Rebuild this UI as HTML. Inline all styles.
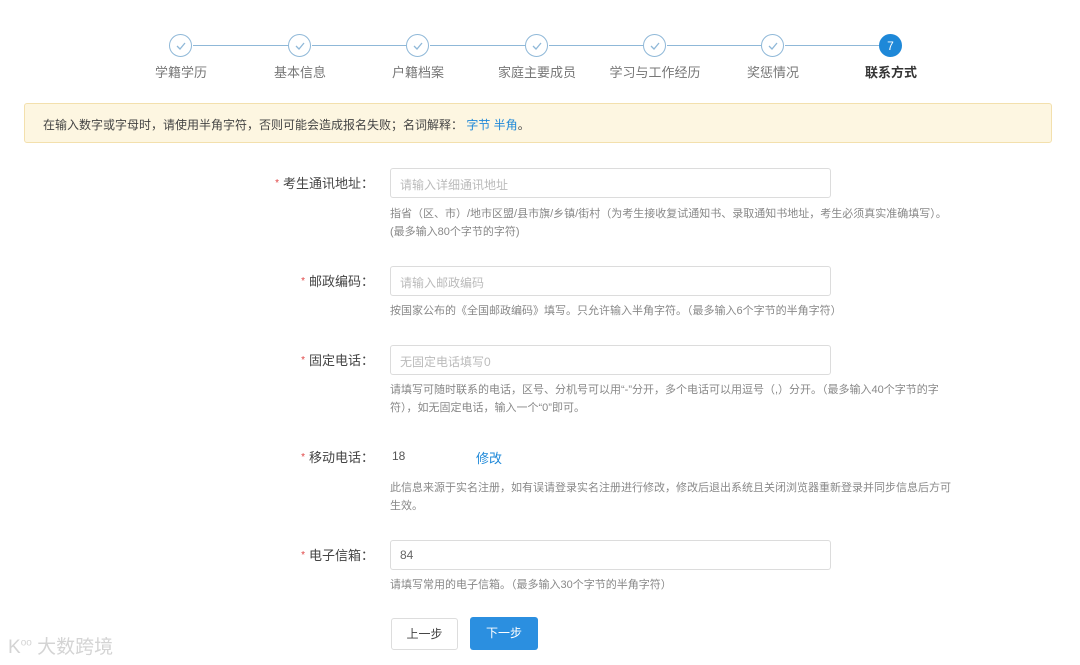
<!DOCTYPE html>
<html><head><meta charset="utf-8"><style>
*{margin:0;padding:0;box-sizing:border-box}
body{width:1080px;height:665px;background:#fff;font-family:"Liberation Sans","Noto Sans CJK SC",sans-serif;position:relative;overflow:hidden;color:#333}
.a{position:absolute}
.c{width:23px;height:23px;border:1.5px solid #8fb8d8;border-radius:50%;display:flex;align-items:center;justify-content:center;background:#fff}
.c.on{background:#1e88d8;border-color:#1e88d8;color:#fff;font-size:12px}
.ln{height:1px;background:#8fb8d8;top:45px}
.sl{top:62px;font-size:13px;color:#777;width:110px;text-align:center}
.lab{font-size:13px;color:#444;text-align:right;width:160px;left:214px}
.lab b{color:#e04444;font-weight:normal;font-size:10px;margin-right:4px;vertical-align:2px}
.in{left:390px;width:441px;height:30px;border:1px solid #dcdcdc;border-radius:3px;font-size:12px;color:#bbb;padding:7px 9px}
.h{left:390px;width:570px;font-size:11px;color:#888;line-height:18px}
</style></head><body>
<div class="a ln" style="left:193px;width:96px"></div>
<div class="a ln" style="left:312px;width:94px"></div>
<div class="a ln" style="left:430px;width:95px"></div>
<div class="a ln" style="left:549px;width:94px"></div>
<div class="a ln" style="left:667px;width:94px"></div>
<div class="a ln" style="left:785px;width:94px"></div>
<div class="a c" style="left:169px;top:34px"><svg width="10" height="8"><path d="M1 4l3 3 5-6" fill="none" stroke="#8fb8d8" stroke-width="1.3"/></svg></div>
<div class="a c" style="left:288px;top:34px"><svg width="10" height="8"><path d="M1 4l3 3 5-6" fill="none" stroke="#8fb8d8" stroke-width="1.3"/></svg></div>
<div class="a c" style="left:406px;top:34px"><svg width="10" height="8"><path d="M1 4l3 3 5-6" fill="none" stroke="#8fb8d8" stroke-width="1.3"/></svg></div>
<div class="a c" style="left:525px;top:34px"><svg width="10" height="8"><path d="M1 4l3 3 5-6" fill="none" stroke="#8fb8d8" stroke-width="1.3"/></svg></div>
<div class="a c" style="left:643px;top:34px"><svg width="10" height="8"><path d="M1 4l3 3 5-6" fill="none" stroke="#8fb8d8" stroke-width="1.3"/></svg></div>
<div class="a c" style="left:761px;top:34px"><svg width="10" height="8"><path d="M1 4l3 3 5-6" fill="none" stroke="#8fb8d8" stroke-width="1.3"/></svg></div>
<div class="a c on" style="left:879px;top:34px">7</div>
<div class="a sl" style="left:126px">学籍学历</div>
<div class="a sl" style="left:245px">基本信息</div>
<div class="a sl" style="left:363px">户籍档案</div>
<div class="a sl" style="left:482px">家庭主要成员</div>
<div class="a sl" style="left:600px">学习与工作经历</div>
<div class="a sl" style="left:718px">奖惩情况</div>
<div class="a sl" style="left:836px;color:#333;font-weight:bold">联系方式</div>
<div class="a" style="left:24px;top:103px;width:1028px;height:40px;background:#fdf6e1;border:1px solid #f3e0ad;border-radius:3px;font-size:12px;color:#444;padding:12px 18px">在输入数字或字母时，请使用半角字符，否则可能会造成报名失败；名词解释：&nbsp;<span style="color:#1e88d8">字节 半角</span>。</div>
<div class="a lab" style="top:173px"><b>*</b>考生通讯地址：</div>
<div class="a in" style="top:168px">请输入详细通讯地址</div>
<div class="a h" style="top:205px">指省（区、市）/地市区盟/县市旗/乡镇/街村（为考生接收复试通知书、录取通知书地址，考生必须真实准确填写）。<br>(最多输入80个字节的字符)</div>
<div class="a lab" style="top:271px"><b>*</b>邮政编码：</div>
<div class="a in" style="top:266px">请输入邮政编码</div>
<div class="a h" style="top:302px">按国家公布的《全国邮政编码》填写。只允许输入半角字符。（最多输入6个字节的半角字符）</div>
<div class="a lab" style="top:350px"><b>*</b>固定电话：</div>
<div class="a in" style="top:345px">无固定电话填写0</div>
<div class="a h" style="top:381px;width:560px">请填写可随时联系的电话，区号、分机号可以用“-”分开，多个电话可以用逗号（,）分开。（最多输入40个字节的字符），如无固定电话，输入一个“0”即可。</div>
<div class="a lab" style="top:447px"><b>*</b>移动电话：</div>
<div class="a" style="left:392px;top:449px;font-size:12px;color:#555">18</div>
<div class="a" style="left:476px;top:448px;font-size:13px;color:#1e88d8">修改</div>
<div class="a h" style="top:479px;width:570px">此信息来源于实名注册，如有误请登录实名注册进行修改，修改后退出系统且关闭浏览器重新登录并同步信息后方可生效。</div>
<div class="a lab" style="top:545px"><b>*</b>电子信箱：</div>
<div class="a in" style="top:540px;color:#666">84</div>
<div class="a h" style="top:576px">请填写常用的电子信箱。（最多输入30个字节的半角字符）</div>
<div class="a" style="left:391px;top:618px;width:67px;height:32px;border:1px solid #ddd;border-radius:3px;font-size:12px;color:#444;text-align:center;line-height:30px">上一步</div>
<div class="a" style="left:470px;top:617px;width:68px;height:33px;background:#2b8fe0;border-radius:3px;font-size:12px;color:#fff;text-align:center;line-height:33px">下一步</div>
<div class="a" style="left:8px;top:632px;font-size:19px;color:#d4d4d4">K<sup style="font-size:10px">oo</sup> 大数跨境</div>
</body></html>
